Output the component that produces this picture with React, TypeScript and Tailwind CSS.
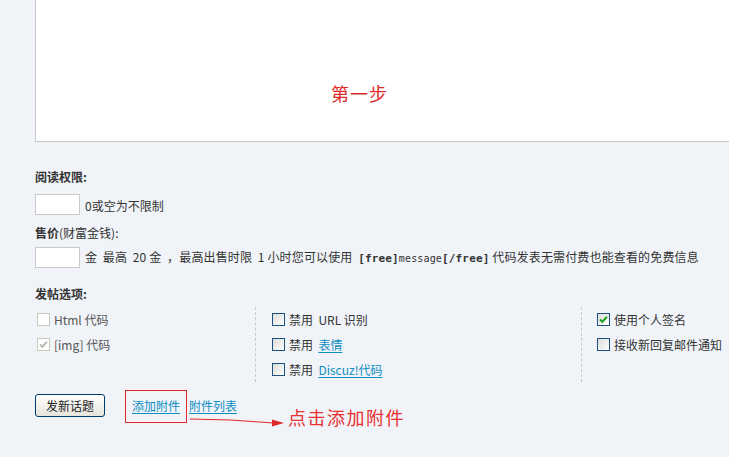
import type { ReactNode } from "react";

const FONT = { fontFamily: '"Noto Sans CJK SC", "Liberation Sans", sans-serif' };

type BoxProps = { checked?: boolean; disabled?: boolean };

function CheckBox({ checked, disabled }: BoxProps) {
  return (
    <span
      className={
        disabled
          ? "flex h-[13px] w-[13px] shrink-0 items-center justify-center border border-[#cac8bb] bg-white"
          : "flex h-[13px] w-[13px] shrink-0 items-center justify-center border border-[#1c5180] bg-gradient-to-br from-[#dcdcd7] to-white"
      }
    >
      {checked && (
        <svg width="9" height="9" viewBox="0 0 9 9" aria-hidden>
          <path
            d="M1 4.5 L3.3 6.8 L8 1.8"
            fill="none"
            stroke={disabled ? "#bcbcb5" : "#21a121"}
            strokeWidth="2"
          />
        </svg>
      )}
    </span>
  );
}

function Option({ children, checked, disabled }: BoxProps & { children: ReactNode }) {
  return (
    <label
      className={`flex h-[25px] items-center gap-[4px] whitespace-nowrap ${
        disabled ? "text-[#555]" : "text-[#333]"
      }`}
    >
      <CheckBox checked={checked} disabled={disabled} />
      <span>{children}</span>
    </label>
  );
}

const linkCls = "text-[#0e8ec0] underline underline-offset-2";

export default function App() {
  return (
    <div className="h-[473px] w-[729px] overflow-hidden bg-white text-[12px] text-[#333]" style={FONT}>
      <div className="h-[457px] bg-[#f0f3f8]">
        {/* editor area */}
        <div className="ml-[35px] flex h-[142px] items-end justify-center border-b border-l border-[#c6c6c6] bg-white pb-[34px] pr-[46px]">
          <span className="text-[18px] tracking-[1px] text-[#e02a2a]">第一步</span>
        </div>

        <div className="px-[35px]">
          <div className="mt-[26px] font-bold leading-[18px]">阅读权限:</div>
          <div className="mt-[7px] flex items-center gap-[5px]">
            <input className="h-[21px] w-[45px] border border-[#c9c9c9] bg-white" />
            <span className="pt-[4px]">0或空为不限制</span>
          </div>
          <div className="mt-[9px] leading-[18px]">
            <b>售价</b>(财富金钱):
          </div>
          <div className="mt-[5px] flex items-center gap-[5px]">
            <input className="h-[21px] w-[45px] border border-[#c9c9c9] bg-white" />
            <span className="whitespace-nowrap tracking-[0.15px]">
              金&nbsp; 最高&nbsp; 20 金&nbsp; ，最高出售时限&nbsp; 1 小时您可以使用&nbsp;{" "}
              <span style={{ fontFamily: '"DejaVu Sans Mono", monospace' }}>
                <b className="text-[11px]">[free]</b>
                <span className="text-[10px]">message</span>
                <b className="text-[11px]">[/free]</b>
              </span>{" "}
              代码发表无需付费也能查看的免费信息
            </span>
          </div>

          <div className="mt-[17px] font-bold leading-[18px]">发帖选项:</div>
          <div className="mt-[4px] flex">
            <div className="w-[220px] shrink-0 pl-[2px]">
              <Option disabled>Html 代码</Option>
              <Option disabled checked>
                [img] 代码
              </Option>
            </div>
            <div className="w-[326px] shrink-0 border-l border-dashed border-[#c9c9c9] pl-[16px]">
              <Option>禁用&nbsp; URL 识别</Option>
              <Option>
                禁用&nbsp; <a className={linkCls}>表情</a>
              </Option>
              <Option>
                禁用&nbsp; <a className={linkCls}>Discuz!代码</a>
              </Option>
            </div>
            <div className="h-[75px] shrink-0 border-l border-dashed border-[#c9c9c9] pl-[15px]">
              <Option checked>使用个人签名</Option>
              <Option>接收新回复邮件通知</Option>
            </div>
          </div>

          <div className="relative mt-[8px] flex items-start">
            <button
              type="button"
              className="mt-[4px] h-[23px] w-[70px] rounded-[3px] border border-[#003c74] bg-gradient-to-b from-white to-[#e6e4da] text-[12px] text-[#222]"
            >
              发新话题
            </button>
            <div className="ml-[20px] h-[33px] border border-[#e02a2a] px-[6px] pt-[6px]">
              <a className={linkCls}>添加附件</a>
            </div>
            <a className={`${linkCls} ml-[2px] pt-[7px]`}>附件列表</a>

            <svg className="absolute left-[155px] top-[28px]" width="96" height="10" viewBox="0 0 96 10" aria-hidden>
              <path d="M0 1 L40 2 L84 5" fill="none" stroke="#e02a2a" strokeWidth="1" />
              <path d="M82 1.5 L94 5 L82 8.5 Z" fill="#e02a2a" />
            </svg>
            <span className="absolute left-[253px] top-[14px] text-[18px] tracking-[1.5px] text-[#e83030]">
              点击添加附件
            </span>
          </div>
        </div>
      </div>
    </div>
  );
}
